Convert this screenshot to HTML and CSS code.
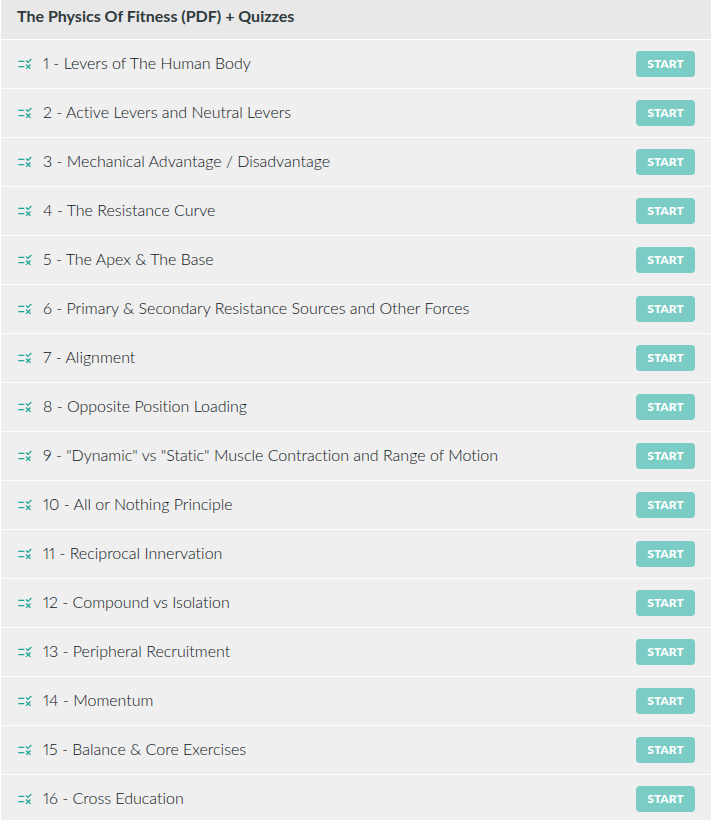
FILE: index.html
```
<!DOCTYPE html>
<html lang="en">
<head>
    <meta charset="UTF-8">
    <meta name="viewport" content="width=device-width, initial-scale=1.0">
    <title>The Physics Of Fitness</title>
    <link rel="stylesheet" href="styles.css">
</head>
<body>
    <svg class="sprite" aria-hidden="true">
        <symbol id="quiz" viewBox="0 0 24 24">
            <path d="M16.54 11L13 7.46l1.41-1.41 2.12 2.12 4.24-4.24 1.41 1.41L16.54 11zM11 7H2v2h9V7zm10 6.41L19.59 12 17 14.59 14.41 12 13 13.41 15.59 16 13 18.59 14.41 20 17 17.41 19.59 20 21 18.59 18.41 16 21 13.41zM11 15H2v2h9v-2z"/>
        </symbol>
    </svg>
    <section class="course">
        <h2 class="course-title">The Physics Of Fitness (PDF) + Quizzes</h2>
        <ul class="lessons">
            <li class="lesson">
                <svg class="icon"><use href="#quiz"/></svg>
                <span class="name" id="l1">1 - Levers of The Human Body</span>
                <button class="start" aria-describedby="l1">START</button>
            </li>
            <li class="lesson">
                <svg class="icon"><use href="#quiz"/></svg>
                <span class="name" id="l2">2 - Active Levers and Neutral Levers</span>
                <button class="start" aria-describedby="l2">START</button>
            </li>
            <li class="lesson">
                <svg class="icon"><use href="#quiz"/></svg>
                <span class="name" id="l3">3 - Mechanical Advantage / Disadvantage</span>
                <button class="start" aria-describedby="l3">START</button>
            </li>
            <li class="lesson">
                <svg class="icon"><use href="#quiz"/></svg>
                <span class="name" id="l4">4 - The Resistance Curve</span>
                <button class="start" aria-describedby="l4">START</button>
            </li>
            <li class="lesson">
                <svg class="icon"><use href="#quiz"/></svg>
                <span class="name" id="l5">5 - The Apex &amp; The Base</span>
                <button class="start" aria-describedby="l5">START</button>
            </li>
            <li class="lesson">
                <svg class="icon"><use href="#quiz"/></svg>
                <span class="name" id="l6">6 - Primary &amp; Secondary Resistance Sources and Other Forces</span>
                <button class="start" aria-describedby="l6">START</button>
            </li>
            <li class="lesson">
                <svg class="icon"><use href="#quiz"/></svg>
                <span class="name" id="l7">7 - Alignment</span>
                <button class="start" aria-describedby="l7">START</button>
            </li>
            <li class="lesson">
                <svg class="icon"><use href="#quiz"/></svg>
                <span class="name" id="l8">8 - Opposite Position Loading</span>
                <button class="start" aria-describedby="l8">START</button>
            </li>
            <li class="lesson">
                <svg class="icon"><use href="#quiz"/></svg>
                <span class="name" id="l9">9 - "Dynamic" vs "Static" Muscle Contraction and Range of Motion</span>
                <button class="start" aria-describedby="l9">START</button>
            </li>
            <li class="lesson">
                <svg class="icon"><use href="#quiz"/></svg>
                <span class="name" id="l10">10 - All or Nothing Principle</span>
                <button class="start" aria-describedby="l10">START</button>
            </li>
            <li class="lesson">
                <svg class="icon"><use href="#quiz"/></svg>
                <span class="name" id="l11">11 - Reciprocal Innervation</span>
                <button class="start" aria-describedby="l11">START</button>
            </li>
            <li class="lesson">
                <svg class="icon"><use href="#quiz"/></svg>
                <span class="name" id="l12">12 - Compound vs Isolation</span>
                <button class="start" aria-describedby="l12">START</button>
            </li>
            <li class="lesson">
                <svg class="icon"><use href="#quiz"/></svg>
                <span class="name" id="l13">13 - Peripheral Recruitment</span>
                <button class="start" aria-describedby="l13">START</button>
            </li>
            <li class="lesson">
                <svg class="icon"><use href="#quiz"/></svg>
                <span class="name" id="l14">14 - Momentum</span>
                <button class="start" aria-describedby="l14">START</button>
            </li>
            <li class="lesson">
                <svg class="icon"><use href="#quiz"/></svg>
                <span class="name" id="l15">15 - Balance &amp; Core Exercises</span>
                <button class="start" aria-describedby="l15">START</button>
            </li>
            <li class="lesson">
                <svg class="icon"><use href="#quiz"/></svg>
                <span class="name" id="l16">16 - Cross Education</span>
                <button class="start" aria-describedby="l16">START</button>
            </li>
        </ul>
    </section>
</body>
</html>
```

FILE: styles.css
```
body {
    margin: 0;
    background: #fff;
    color: #2f3a3e;
    font-family: 'Lato', 'Open Sans', sans-serif;
    font-size: 16px;
    line-height: 24px;
    font-variant-ligatures: none;
    font-variant-numeric: proportional-nums;
}

.sprite {
    display: none;
}

.course {
    margin-left: 1px;
}

.course-title {
    margin: 0;
    padding: 4px 16px 11px;
    background: #e8e8e8;
    font-size: 16px;
    font-weight: bold;
}

.lessons {
    margin: 0;
    padding: 0;
    list-style: none;
}

.lesson {
    display: flex;
    align-items: center;
    padding: 11px 16px;
    border-top: 1px solid #fff;
    background: #efefef;
}

.lesson:last-child {
    padding-bottom: 8px;
}

.icon {
    flex: none;
    width: 16px;
    height: 16px;
    margin-right: 10px;
    fill: #1fa596;
}

.name {
    flex: 1;
    padding-bottom: 2px;
    color: #0c1417;
    font-weight: 300;
}

.start {
    width: 59px;
    height: 26px;
    padding: 0 0 1px;
    border: none;
    border-radius: 4px;
    background: #7accc5;
    color: #fff;
    font-family: inherit;
    font-size: 12px;
    font-weight: 900;
    cursor: pointer;
}

.start:hover {
    background: #2aa99b;
}
```
